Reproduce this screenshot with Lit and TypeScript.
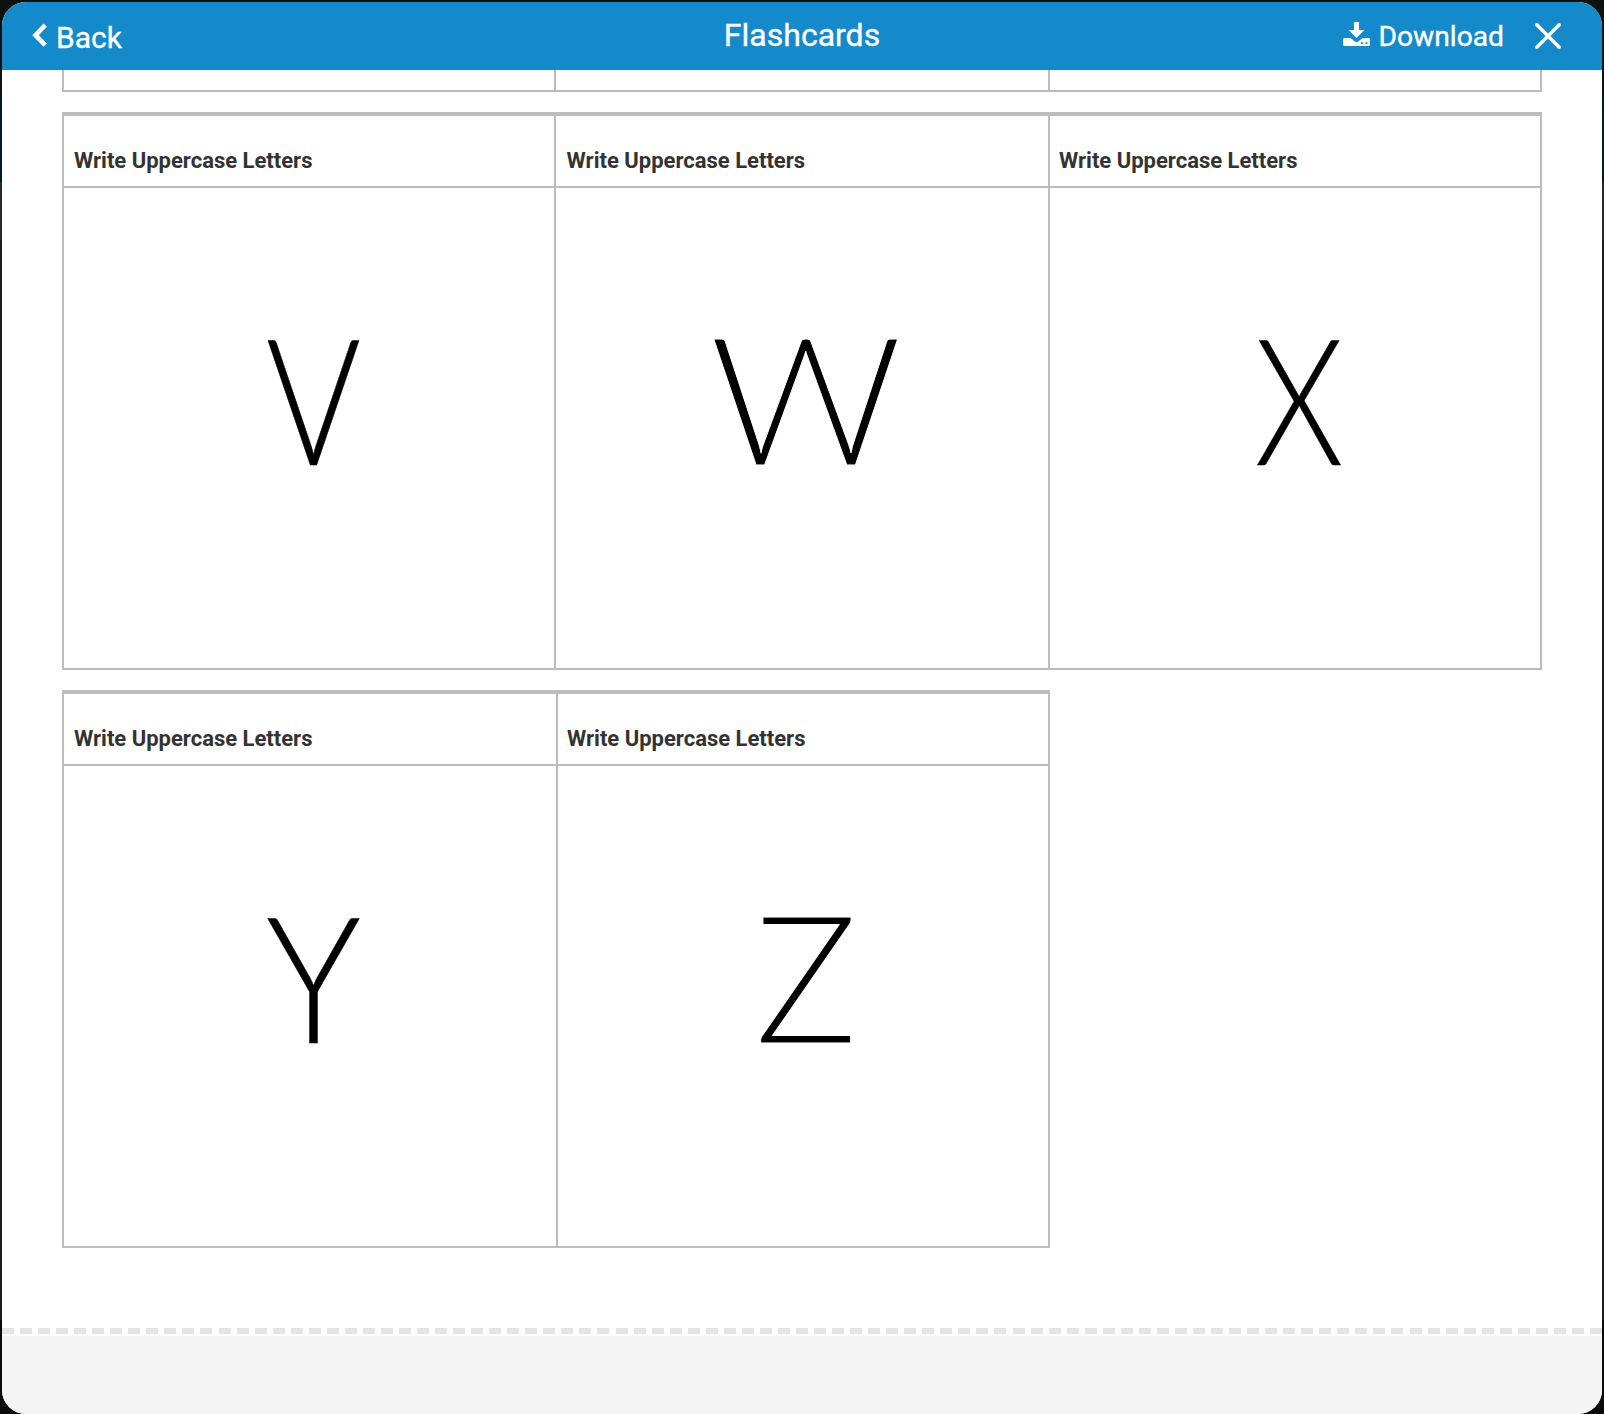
import { LitElement, html, css, svg } from "lit";
import { customElement, property } from "lit/decorators.js";
import { classMap } from "lit/directives/class-map.js";

interface Card {
  letter: string;
  /** left edge of the glyph box inside the card */
  x: number;
  /** advance width of the glyph */
  width: number;
  /** thins the strokes of glyphs that are stretched wide */
  thin?: boolean;
  /** nudges the title off its usual padding */
  inset?: "wide" | "narrow";
}

const TITLE = "Write Uppercase Letters";

const ROWS: Card[][] = [
  [
    { letter: "V", x: 202, width: 95 },
    { letter: "W", x: 153.3, width: 193, thin: true, inset: "wide" },
    { letter: "X", x: 204.5, width: 89.2, inset: "narrow" },
  ],
  [
    { letter: "Y", x: 202, width: 95 },
    { letter: "Z", x: 196.8, width: 103, thin: true, inset: "narrow" },
  ],
];

@customElement("flash-card")
export class FlashCard extends LitElement {
  @property({ attribute: false }) card!: Card;

  static styles = css`
    :host {
      display: flex;
      flex-direction: column;
      box-sizing: border-box;
      height: 558px;
      border-left: 2px solid #bcbcbc;
    }
    .title {
      box-sizing: border-box;
      height: 76px;
      padding: 32px 10px 0;
      border-top: 4px solid #bcbcbc;
      border-bottom: 2px solid #bcbcbc;
      font-size: 22px;
      line-height: 26px;
      font-weight: 700;
      color: #333;
      white-space: nowrap;
    }
    .wide {
      padding-left: 10.6px;
    }
    .narrow {
      padding-left: 9px;
    }
    .face {
      flex: 1;
      min-height: 0;
      border-bottom: 2px solid #bcbcbc;
    }
    .drawing {
      display: block;
      width: 100%;
      height: 100%;
      overflow: visible;
    }
    .letter {
      font-family: Lato, "Open Sans", sans-serif;
      font-weight: 300;
      font-size: 176px;
      fill: #000;
      stroke: #000;
      stroke-width: 0.4px;
    }
    .thin {
      font-size: 177.5px;
      stroke: #fff;
      stroke-width: 0.9px;
    }
  `;

  render() {
    const c = this.card;
    const title = classMap({ title: true, wide: c.inset === "wide", narrow: c.inset === "narrow" });
    const letter = classMap({ letter: true, thin: !!c.thin });
    return html`
      <div class=${title}>${TITLE}</div>
      <div class="face">
        <svg class="drawing">
          ${svg`<text class=${letter} x=${c.x} y=${c.thin ? 277.4 : 277} textLength=${c.width} lengthAdjust="spacingAndGlyphs">${c.letter}</text>`}
        </svg>
      </div>
    `;
  }
}

@customElement("app-root")
export class AppRoot extends LitElement {
  static styles = css`
    :host {
      display: block;
      box-sizing: border-box;
      height: 1414px;
      padding: 2px 2px 0;
      background: linear-gradient(#0d1110 0 97px, #001a26 97px 182px, #2a2727 182px 240px, #1c1c1e 240px 1320px, #0a0a0a 1320px);
      font-family: Roboto, sans-serif;
    }
    .modal {
      display: flex;
      flex-direction: column;
      height: 1412px;
      border-radius: 24px;
      overflow: hidden;
      background: #fff;
    }
    .bar {
      display: grid;
      grid-template-columns: 1fr auto 1fr;
      flex: none;
      height: 68px;
      box-sizing: border-box;
      padding: 0 41px 0 30px;
      background: #158acb;
      color: #fff;
      white-space: nowrap;
      -webkit-text-stroke: 0.35px #fff;
    }
    .back {
      display: flex;
      align-items: flex-start;
      gap: 8px;
      font-size: 30px;
      line-height: 36px;
      padding-top: 18px;
    }
    .chevron {
      width: 16px;
      height: 26px;
      margin-top: 2px;
    }
    .heading {
      margin: 0;
      padding: 15px 0 0 11px;
      font-size: 32px;
      line-height: 36px;
      font-weight: 400;
    }
    .actions {
      display: flex;
      justify-content: flex-end;
      align-items: flex-start;
      padding-top: 16px;
      font-size: 28.2px;
      line-height: 36px;
    }
    .label {
      padding-top: 1px;
    }
    .tray {
      width: 27px;
      height: 25px;
      margin: 4px 9px 0 0;
    }
    .close {
      width: 26px;
      height: 26px;
      margin: 5px 0 0 31px;
    }
    .sheet {
      flex: none;
      height: 1258px;
      padding: 0 60px;
    }
    .row {
      display: grid;
      box-sizing: border-box;
      margin-bottom: 20px;
      border-right: 2px solid #bcbcbc;
    }
    .full {
      grid-template-columns: 492px 494px 492px;
      width: 1480px;
    }
    .short {
      grid-template-columns: 494px 492px;
      width: 988px;
    }
    .tail {
      height: 22px;
    }
    .cell {
      border-left: 2px solid #bcbcbc;
      border-bottom: 2px solid #bcbcbc;
    }
    .cut {
      flex: none;
      height: 6px;
      margin-bottom: 2px;
      background: repeating-linear-gradient(90deg, #e4e4e4 0 12px, #fff 12px 18.045px);
    }
    .footer {
      flex: 1;
      background: #f4f4f4;
    }
  `;

  render() {
    return html`
      <div class="modal">
        <header class="bar">
          <div class="back">
            <svg class="chevron" viewBox="0 0 16 26">
              <path d="M13.200 3.200 3.500 13.200 13.200 23.200" fill="none" stroke="#fff" stroke-width="4.700" stroke-linecap="butt" />
            </svg>
            <span>Back</span>
          </div>
          <h1 class="heading">Flashcards</h1>
          <div class="actions">
            <svg class="tray" viewBox="0 0 27 25">
              <path
                fill="#fff"
                fill-rule="evenodd"
                d="M11 0h5v8h5.300L13.500 16 5.700 8H11zM1.500 16h6l4.300 3.600q1.700 1.300 3.400 0L19.500 16h6q1.500 0 1.500 1.500v5q0 1.500-1.500 1.500h-24Q0 24 0 22.500v-5Q0 16 1.500 16zM18 20.200v1.800h1.900v-1.800zM22.500 20.200v1.800h1.900v-1.800z"
              />
            </svg>
            <span class="label">Download</span>
            <svg class="close" viewBox="0 0 26 26">
              <path d="M1.800 1.800 24.200 24.200M24.200 1.800 1.800 24.200" stroke="#fff" stroke-width="3.500" stroke-linecap="round" />
            </svg>
          </div>
        </header>
        <main class="sheet">
          <div class="row full tail">
            <div class="cell"></div>
            <div class="cell"></div>
            <div class="cell"></div>
          </div>
          ${ROWS.map(
            (row) => html`
              <div class="row ${row.length === 3 ? "full" : "short"}">
                ${row.map((card) => html`<flash-card .card=${card}></flash-card>`)}
              </div>
            `
          )}
        </main>
        <div class="cut"></div>
        <footer class="footer"></footer>
      </div>
    `;
  }
}
